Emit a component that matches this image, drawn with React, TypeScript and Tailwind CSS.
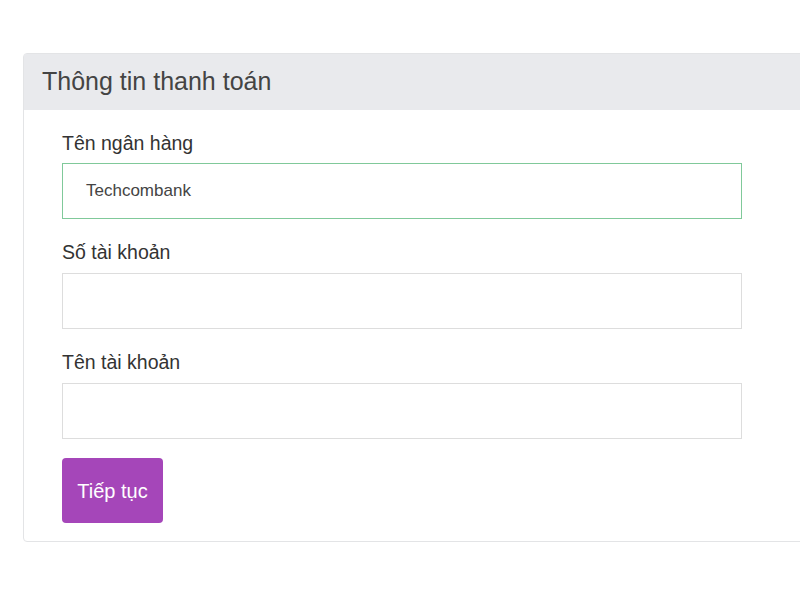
export default function App() {
  return (
    <div className="w-[800px] h-[600px] overflow-hidden bg-white font-['Liberation_Sans',Arial,sans-serif]">
      <div className="ml-[23px] mt-[53px] w-[820px] rounded-[4px] border border-[#e3e4e6] bg-white">
        <div className="h-[56px] bg-[#e9eaed] pl-[18px] flex items-center">
          <h2 className="text-[25px] text-[#444]">Thông tin thanh toán</h2>
        </div>
        <div className="pl-[38px] pt-[21px] pb-[18px]">
          <label className="block h-6 leading-6 text-[19.5px] text-[#333] mb-2">Tên ngân hàng</label>
          <div className="w-[680px] h-[56px] border border-[#80c99a] pl-[23px] flex items-center text-[17px] text-[#444]">
            Techcombank
          </div>
          <label className="block h-6 leading-6 text-[19.5px] text-[#333] mt-[21px] mb-[9px]">Số tài khoản</label>
          <input className="block w-[680px] h-[56px] border border-[#dddddd] outline-none" />
          <label className="block h-6 leading-6 text-[19.5px] text-[#333] mt-[21px] mb-[9px]">Tên tài khoản</label>
          <input className="block w-[680px] h-[56px] border border-[#dddddd] outline-none" />
          <button className="mt-[19px] w-[101px] h-[65px] rounded-[4px] bg-[#a546b9] text-white text-[20px]">
            Tiếp tục
          </button>
        </div>
      </div>
    </div>
  );
}
